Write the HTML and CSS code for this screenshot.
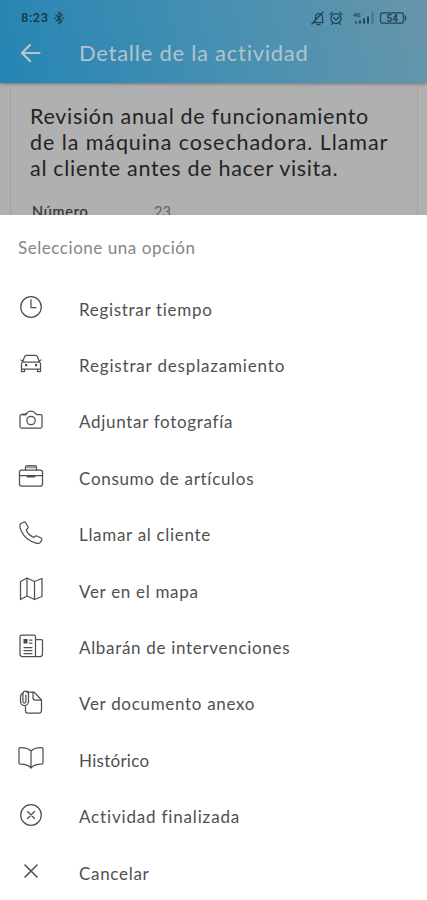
FILE: index.html
```html
<!DOCTYPE html>
<html lang="es">
<head>
<meta charset="utf-8">
<title>Detalle de la actividad</title>
<link rel="stylesheet" href="styles.css">
</head>
<body>
<div class="screen">
  <header class="header">
    <div class="status">
      <span class="clock">8:23</span>
      <svg class="bt" width="10" height="14" viewBox="0 0 10 14"><path d="M2 4l6 6-3 3V1l3 3-6 6M.5 7h1M8.500 7h1"/></svg>
      <svg class="status-icons" width="100" height="16" viewBox="0 0 100 16">
        <path d="M2 12.500h10M3.500 12l1-2V7a3.500 3.500 0 0 1 7 0v3l.5 2M6 14.500h3M.8 14L12 2"/>
        <circle cx="25" cy="8.500" r="5"/><path d="M22.500 7.500L25 10l3-3M19 4.500L21.500 2.500M28.500 2.500L31 4.500M21.500 13l-1 1.500M28.500 13l1 1.500"/>
        <text x="42" y="6.500" class="net">4G</text>
        <path class="bars" d="M45 13.500v-2M49 13.500v-3M53 13.500v-5M57 13.500v-7"/><path class="faint" d="M61.500 13.500v-11"/>
        <rect x="69.500" y="2.800" width="23" height="10.400" rx="2.500"/><path d="M94.500 6v4"/>
        <text x="75.500" y="11.500" class="charge">54</text>
      </svg>
    </div>
    <div class="bar">
      <svg class="back" width="22" height="20" viewBox="0 0 22 20"><path d="M10 2L2 10l8 8M2 10h17.500"/></svg>
      <h1 class="title">Detalle de la actividad</h1>
    </div>
  </header>
  <main class="card">
    <h2 class="summary"><span>Revisión anual de funcionamiento</span><span class="wide">de la máquina cosechadora. Llamar</span><span>al cliente antes de hacer visita.</span></h2>
    <div class="field"><span class="name">Número</span><span class="value">23</span></div>
  </main>
</div>
<section class="sheet">
  <h3 class="prompt">Seleccione una opción</h3>
  <ul class="options">
    <li><svg viewBox="0 0 26 26"><circle cx="13" cy="13" r="10.300"/><path d="M13 5.500v8h5"/></svg><span>Registrar tiempo</span></li>
    <li><svg viewBox="0 0 26 26"><path d="M4.500 11l2.200-5.500Q7.200 4.300 8.500 4.300h9q1.300 0 1.800 1.200L21.500 11zM4.500 11Q3.500 11.500 3.500 13v7.500h3V18h13v2.500h3V13q0-1.500-1-2M3.500 18h19M3 9l2 1M23 9l-2 1"/><path class="fill" d="M7 13h2.200v2.200H7zM17 13h2.200v2.200H17z"/></svg><span class="wide">Registrar desplazamiento</span></li>
    <li><svg viewBox="0 0 26 26"><path d="M3.500 7.500h4l2-2q1-1.500 3.500-1.500t3.500 1.500l2 2h4q1.500 0 1.500 1.500v10.500q0 1.500-1.500 1.500h-19Q2 21 2 19.500V9q0-1.500 1.500-1.500z"/><circle cx="13" cy="13.500" r="4.200"/><path class="thick" d="M4.500 7.300h3.500"/></svg><span>Adjuntar fotografía</span></li>
    <li><svg viewBox="0 0 26 26"><rect x="1.500" y="7" width="23" height="16" rx="2"/><path d="M1.500 12.500h23M7.500 7V4q0-1.500 1.500-1.500h8q1.500 0 1.500 1.500v3"/><path class="shade" d="M8 4h10"/><path class="thick" d="M9.500 13.500h7"/></svg><span>Consumo de artículos</span></li>
    <li><svg viewBox="0 0 26 26"><path d="M3 3.500l3-1.500q1-.300 1.700.700l2.300 4q.500 1-.400 1.700L8.300 10q1.500 4.500 7.500 7.500l1.500-1.300q.800-.700 1.700-.200l4.400 2.200q1 .600.500 1.600l-1.600 2.500q-1 1.500-3.500 1Q8 21 3 10.500 1.500 6.500 2 5.200q.300-1.200 1-1.700z"/></svg><span>Llamar al cliente</span></li>
    <li><svg viewBox="0 0 26 26"><path d="M2.500 5.500L9 2l7.500 3.500L24 2.500v18l-7.500 3L9 20l-6.500 3.500zM9 2v18M16.500 5.500v18"/></svg><span>Ver en el mapa</span></li>
    <li><svg viewBox="0 0 26 26"><path d="M17.500 23.500H4.500q-2.500 0-2.500-2.500V3.500Q2 2 3.500 2h12.500q1.500 0 1.500 1.500zh4.500q2.500 0 2.500-2.500V7.500q0-1-1-1h-6M6 14.500h8M6 17.500h8M6 20.500h8M11.500 7H14M11.500 10H14"/><path class="fill" d="M5.500 6h4v4.500h-4z"/></svg><span>Albarán de intervenciones</span></li>
    <li><svg viewBox="0 0 26 26"><path d="M7.500 17.500v4.500q0 2 2 2H21q2.500 0 2.500-2.500V11L16 3H8.500M15 3v6q0 2 2.500 2h6"/><path d="M2.500 7.500v5a4 4 0 0 0 8 0V5a2.800 2.800 0 0 0-5.600 0v7.500a1.500 1.500 0 0 0 3 0V6M2.500 8Q2.500 5 5 4"/></svg><span>Ver documento anexo</span></li>
    <li><svg viewBox="0 0 26 26"><path d="M13 6Q10 2.500 2.500 2.500q-1.500 0-1.500 1V18q0 1.200 1.500 1.200Q10 19.200 13 23q3-3.800 10.500-3.800 1.500 0 1.500-1.200V3.500q0-1-1.500-1Q16 2.500 13 6zv17"/></svg><span class="tight">Histórico</span></li>
    <li><svg viewBox="0 0 26 26"><circle cx="13" cy="13" r="10.300"/><path d="M9.500 9.500l7 7M16.500 9.500l-7 7"/></svg><span class="wide">Actividad finalizada</span></li>
    <li><svg viewBox="0 0 26 26"><path class="cross" d="M7 7l12 12M19 7L7 19"/></svg><span>Cancelar</span></li>
  </ul>
</section>
</body>
</html>
```
FILE: styles.css
```css
* { box-sizing: border-box; }
body { margin: 0; width: 427px; height: 900px; overflow: hidden; background: #fff; font-family: Lato, "Open Sans", sans-serif; display: flex; flex-direction: column; }
h1, h2, h3, ul { margin: 0; padding: 0; font-weight: 400; }
svg { fill: none; stroke: #505050; stroke-width: 1.25; stroke-linejoin: round; stroke-linecap: round; flex: none; }
.screen { height: 215px; flex: none; overflow: hidden; background: #b0b0b0; display: flex; flex-direction: column; }
.header { height: 83px; flex: none; background: linear-gradient(75deg, #2585b4 0%, #458fb2 50%, #6796ab 100%); box-shadow: 0 1px 3px rgba(0, 0, 0, .35); }
.status { height: 36px; display: flex; align-items: center; padding: 0 16px 0 21px; }
.clock { font: 500 13px/16px Roboto, sans-serif; color: #16384a; letter-spacing: .5px; }
.status svg { stroke: #1f4557; }
.bt { margin-left: 5px; }
.status-icons { margin-left: auto; }
.status-icons text { fill: #1f4557; stroke: none; font-family: Roboto, sans-serif; font-weight: 700; }
.net { font-size: 6px; }
.charge { font-size: 10px; }
.bars { stroke-width: 2; stroke-linecap: butt; }
.faint { stroke-opacity: .4; stroke-width: 2; }
.bar { display: flex; align-items: center; height: 34px; padding-left: 20px; }
.back { stroke: #b9c7cd; stroke-width: 2.2; }
.title { margin-left: 37px; font-size: 22px; line-height: 30px; color: #b4c3ca; letter-spacing: .73px; white-space: nowrap; }
.card { margin: 3px 9px 0 10px; flex: 1; border: 1px solid #a2a2a2; border-width: 0 1px; padding: 17px 0 0 19px; }
.summary { font-size: 21.500px; line-height: 26px; color: #242424; white-space: nowrap; }
.summary span { display: block; width: max-content; letter-spacing: .69px; }
.summary .wide { letter-spacing: .92px; }
.field { display: flex; margin-top: 21px; padding-left: 2px; font-size: 14.500px; line-height: 20px; color: #333; }
.name { width: 122px; letter-spacing: .8px; -webkit-text-stroke: .2px #333; }
.value { color: #606060; }
.sheet { flex: 1; background: #fff; padding: 21px 18px 0; }
.prompt { font-size: 17px; line-height: 24px; color: #858585; letter-spacing: .55px; width: max-content; }
.options { list-style: none; margin-top: 21px; }
.options li { height: 56.400px; display: flex; align-items: center; font-size: 17px; color: #505050; letter-spacing: .69px; }
.options .wide { letter-spacing: .83px; }
.options .tight { letter-spacing: .28px; }
.options svg { width: 26px; height: 26px; margin: -4px 35px 0 0; }
.options .fill { fill: #484848; stroke: none; }
.options .thick { stroke-width: 1.800; }
.options .shade { stroke: #999; stroke-width: 2.500; stroke-linecap: butt; }
.options .cross { stroke-width: 1.600; }
```
